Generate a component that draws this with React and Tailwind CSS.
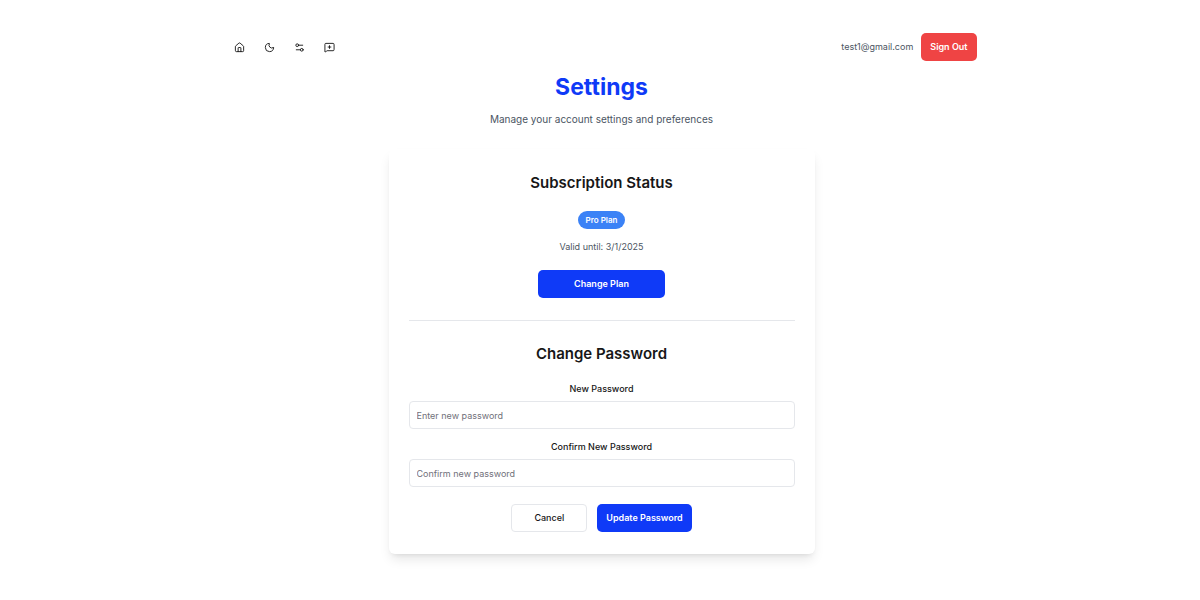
import { House, Moon, Settings2, MessageSquarePlus } from "lucide-react";

const primary = "rounded-[5px] bg-[#0f3af7] text-white";
const field =
  "h-7 w-full rounded border border-gray-200 bg-white px-[7px] text-[9px] text-gray-900 placeholder:text-[#71717a]";

function Field({ id, label, placeholder }) {
  return (
    <div className="flex flex-col items-center">
      <label htmlFor={id} className="mb-1 text-[9px] leading-4 font-medium">
        {label}
      </label>
      <input id={id} type="password" placeholder={placeholder} className={field} />
    </div>
  );
}

const links = [
  { label: "Home", Icon: House },
  { label: "Dark mode", Icon: Moon },
  { label: "Preferences", Icon: Settings2 },
  { label: "Feedback", Icon: MessageSquarePlus },
];

export default function App() {
  return (
    <div className="min-h-screen bg-white pt-[33px] pl-[3px] font-['Inter',sans-serif] text-[#171717]">
      <header className="mx-auto flex h-7 w-full max-w-[750px] items-center justify-between pl-[7px]">
        <nav className="flex gap-[19px]">
          {links.map(({ label, Icon }) => (
            <a key={label} href="#" aria-label={label}>
              <Icon size={11} />
            </a>
          ))}
        </nav>
        <div className="flex items-center gap-2">
          <span className="text-[9px] text-[#4b5563]">test1@gmail.com</span>
          <button className="h-7 rounded-[5px] bg-[#ef4444] px-[9px] text-[9px] font-semibold text-white">
            Sign Out
          </button>
        </div>
      </header>

      <main className="mx-auto w-full max-w-[426px] text-center">
        <h1 className="mt-2 text-[23px] leading-9 font-bold text-[#0f3af7]">Settings</h1>
        <p className="mt-1 text-[10px] leading-5 text-[#4b5563]">Manage your account settings and preferences</p>

        <div className="mt-5 rounded-md px-5 py-[22px] shadow-[0_7px_12px_-2px_rgba(0,0,0,0.1),0_3px_5px_-3px_rgba(0,0,0,0.1)]">
          <section className="flex flex-col items-center border-b border-gray-200 pb-[22px]">
            <h2 className="text-[15px] leading-6 font-semibold">Subscription Status</h2>
            <span className="mt-4 rounded-full bg-[#3b82f6] px-2 text-[8px] leading-[18px] font-semibold text-white">
              Pro Plan
            </span>
            <p className="mt-[10px] text-[9px] leading-4 text-[#4b5563]">Valid until: 3/1/2025</p>
            <button className={`mt-[15px] h-7 w-[127px] text-[9px] font-semibold ${primary}`}>Change Plan</button>
          </section>
          <form className="pt-[21px]" onSubmit={(e) => e.preventDefault()}>
            <h2 className="mb-[15px] text-[15px] leading-6 font-semibold">Change Password</h2>
            <div className="flex flex-col gap-[10px]">
              <Field id="new" label="New Password" placeholder="Enter new password" />
              <Field id="confirm" label="Confirm New Password" placeholder="Confirm new password" />
            </div>
            <div className="mt-[17px] flex justify-center gap-[10px]">
              <button type="button" className="h-7 w-[76px] rounded border border-gray-200 text-[9px] font-medium">
                Cancel
              </button>
              <button type="submit" className={`h-7 px-[9px] text-[9px] font-semibold ${primary}`}>
                Update Password
              </button>
            </div>
          </form>
        </div>
      </main>
    </div>
  );
}
